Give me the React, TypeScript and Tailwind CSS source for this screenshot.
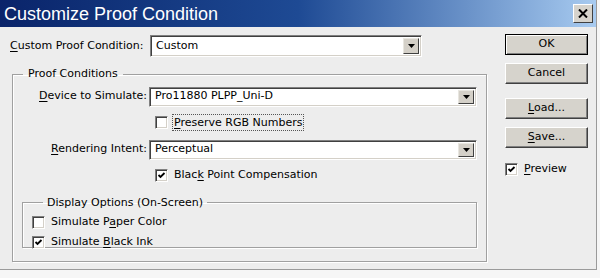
import React from 'react'

function U({ children }: { children: React.ReactNode }) {
  return <span className="underline underline-offset-2 decoration-1">{children}</span>
}

function Check({ checked }: { checked?: boolean }) {
  return (
    <span className="inline-flex items-center justify-center w-[13px] h-[13px] shrink-0 bg-white border border-t-[#808080] border-l-[#808080] border-b-white border-r-white shadow-[inset_1px_1px_0_#404040,inset_-1px_-1px_0_#d4d0c8]">
      {checked && (
        <svg width="9" height="9" viewBox="0 0 9 9">
          <path d="M1.5 4 L3.5 6 L7.5 2" fill="none" stroke="#000" strokeWidth="1.8" />
        </svg>
      )}
    </span>
  )
}

function Combo({ value, className }: { value: string; className: string }) {
  return (
    <div className={`flex items-stretch bg-white border border-t-[#808080] border-l-[#808080] border-b-white border-r-white shadow-[inset_1px_1px_0_#404040,inset_-1px_-1px_0_#d4d0c8] p-[2px] ${className}`}>
      <span className="flex-1 flex items-center pl-[3px] text-black">{value}</span>
      <span className="w-[16px] flex items-center justify-center bg-[#d4d0c8] border border-t-[#e8e6e0] border-l-[#e8e6e0] border-b-[#404040] border-r-[#404040]">
        <svg width="7" height="4" viewBox="0 0 7 4">
          <path d="M0 0 H7 L3.5 4 Z" fill="#000" />
        </svg>
      </span>
    </div>
  )
}

function Btn({ children, def }: { children: React.ReactNode; def?: boolean }) {
  return (
    <div
      className={`w-[83px] h-[21px] flex items-center justify-center bg-[#d6d3cc] border ${
        def
          ? 'border-black shadow-[inset_1px_1px_0_#fff,inset_-1px_-1px_0_#808080]'
          : 'border-t-white border-l-white border-b-[#404040] border-r-[#404040] shadow-[inset_-1px_-1px_0_#808080]'
      }`}
    >
      {children}
    </div>
  )
}

export default function App() {
  return (
    <div className="w-[600px] h-[278px] bg-[#f6f6f6] font-['DejaVu_Sans',sans-serif] text-[11px] text-black overflow-hidden">
      <div className="w-[597px] h-[270px] bg-[#ededed] border-r border-b border-r-[#9a9a9a] border-b-[#9a9a9a] flex flex-col">
        {/* title bar */}
        <div className="h-[27px] flex items-center justify-between pl-[4px] pr-[3px] bg-linear-to-r from-[#0a246a] via-[#1e4a94] to-[#a8cbf0]">
          <span className="text-white text-[18px] leading-none font-['Liberation_Sans',sans-serif]">Customize Proof Condition</span>
          <span className="w-[20px] h-[19px] flex items-center justify-center bg-[#d6d3cc] border border-t-white border-l-white border-b-[#404040] border-r-[#404040]">
            <svg width="10" height="9" viewBox="0 0 10 9">
              <path d="M1 0.5 L9 8.5 M9 0.5 L1 8.5" stroke="#000" strokeWidth="2" />
            </svg>
          </span>
        </div>

        <div className="flex pt-[8px] pl-[10px]">
          {/* left column */}
          <div className="w-[477px] flex flex-col">
            <div className="flex items-center h-[22px]">
              <span className="w-[140px]">
                <U>C</U>ustom Proof Condition:
              </span>
              <Combo value="Custom" className="w-[272px] h-[22px]" />
            </div>

            <fieldset className="ml-[2px] mt-[9px] h-[196px] border border-[#a0a0a0] shadow-[1px_1px_0_#fff,inset_1px_1px_0_#fff] pl-[1px] pr-[9px]">
              <legend className="ml-[9px] px-[5px]">Proof Conditions</legend>

              <div className="flex items-center h-[20px] mt-[4px]">
                <span className="w-[135px] text-right pr-[2px]">
                  <U>D</U>evice to Simulate:
                </span>
                <Combo value="Pro11880 PLPP_Uni-D" className="flex-1 h-[20px]" />
              </div>

              <div className="flex items-center gap-[4px] ml-[141px] mt-[6px] h-[19px]">
                <Check />
                <span className="border border-dotted border-[#555] px-[1px] leading-[15px]">
                  <U>P</U>reserve RGB Numbers
                </span>
              </div>

              <div className="flex items-center h-[20px] mt-[8px]">
                <span className="w-[135px] text-right pr-[2px]">
                  <U>R</U>endering Intent:
                </span>
                <Combo value="Perceptual" className="flex-1 h-[20px]" />
              </div>

              <div className="flex items-center gap-[6px] ml-[141px] mt-[9px] h-[14px]">
                <Check checked />
                <span>
                  Blac<U>k</U> Point Compensation
                </span>
              </div>

              <fieldset className="ml-[8px] mt-[12px] h-[53px] border border-[#a0a0a0] shadow-[1px_1px_0_#fff,inset_1px_1px_0_#fff] pl-[9px]">
                <legend className="ml-[11px] px-[4px]">Display Options (On-Screen)</legend>
                <div className="flex items-center gap-[6px] mt-[4px] h-[14px]">
                  <Check />
                  <span>
                    Simulate P<U>a</U>per Color
                  </span>
                </div>
                <div className="flex items-center gap-[6px] mt-[6px] h-[14px]">
                  <Check checked />
                  <span>
                    Simulate <U>B</U>lack Ink
                  </span>
                </div>
              </fieldset>
            </fieldset>
          </div>

          {/* right column */}
          <div className="ml-[18px] flex flex-col">
            <div className="mt-[-1px]">
              <Btn def>OK</Btn>
            </div>
            <div className="mt-[8px]">
              <Btn>Cancel</Btn>
            </div>
            <div className="mt-[14px]">
              <Btn>
                <U>L</U>oad...
              </Btn>
            </div>
            <div className="mt-[8px]">
              <Btn>
                <U>S</U>ave...
              </Btn>
            </div>
            <div className="flex items-center gap-[6px] mt-[13px]">
              <Check checked />
              <span>
                <U>P</U>review
              </span>
            </div>
          </div>
        </div>
      </div>
    </div>
  )
}
